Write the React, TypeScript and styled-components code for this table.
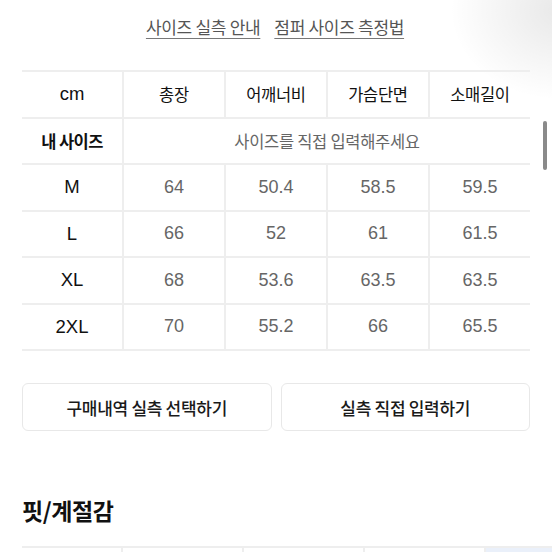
import React from "react";
import styled, { createGlobalStyle } from "styled-components";

const Global = createGlobalStyle`
  html, body { margin: 0; padding: 0; background: #fff; }
  body { font-family: "Liberation Sans", "Noto Sans CJK KR", sans-serif; overflow: hidden; }
`;

const Page = styled.div`
  position: relative;
  width: 552px;
  height: 552px;
  overflow: hidden;
  background: radial-gradient(ellipse 110px 90px at 560px 10px, rgba(0,0,0,0.09), rgba(0,0,0,0) 100%), #fff;
`;

const Content = styled.div`
  padding: 14px 22px 0 22px;
  width: 508px;
`;

const Links = styled.div`
  display: flex;
  justify-content: center;
  gap: 14px;
  height: 24px;
  align-items: center;
  padding-right: 2px;
`;

const LinkText = styled.a`
  font-family: "Noto Sans CJK KR", sans-serif;
  font-size: 17px;
  color: #555;
  text-decoration: underline;
  text-underline-offset: 4px;
  text-decoration-color: #777;
  letter-spacing: -0.3px;
`;

const Table = styled.div`
  margin-top: 32px;
  border-top: 2px solid #eeeeee;
`;

const Row = styled.div`
  display: grid;
  grid-template-columns: 100px 102px 102px 102px 102px;
  height: 44.5px;
  border-bottom: 2px solid #eeeeee;
`;

const Cell = styled.div<{ $kind?: "head" | "label" | "value"; $span?: number }>`
  display: flex;
  align-items: center;
  justify-content: center;
  grid-column: span ${(p) => p.$span ?? 1};
  font-family: "Liberation Sans", "Noto Sans CJK KR", sans-serif;
  font-size: ${(p) => (p.$kind === "value" ? "18px" : "18.5px")};
  color: ${(p) => (p.$kind === "value" ? "#666" : "#111")};
  font-weight: ${(p) => (p.$kind === "label" ? 500 : 400)};
  & + & { border-left: 2px solid #eeeeee; }
`;

const KoText = styled.span<{ $bold?: boolean }>`
  font-family: "Noto Sans CJK KR", sans-serif;
  font-size: ${(p) => (p.$bold ? "16.5px" : "16.5px")};
  font-weight: ${(p) => (p.$bold ? 700 : 400)};
  letter-spacing: ${(p) => (p.$bold ? "-0.6px" : "-0.3px")};
`;

const Buttons = styled.div`
  display: grid;
  grid-template-columns: 1fr 1fr;
  gap: 9px;
  margin-top: 32px;
`;

const Button = styled.button`
  height: 48px;
  border: 1.5px solid #e8e8e8;
  border-radius: 6px;
  background: #fff;
  font-family: "Noto Sans CJK KR", sans-serif;
  font-size: 17px;
  font-weight: 500;
  color: #1a1a1a;
  letter-spacing: -0.3px;
`;

const Heading = styled.h2`
  margin: 65px 0 0 0;
  font-family: "Noto Sans CJK KR", sans-serif;
  font-size: 23px;
  font-weight: 700;
  color: #111;
  letter-spacing: -0.4px;
  line-height: 28px;
`;

const FitRow = styled.div`
  margin-top: 22px;
  display: grid;
  grid-template-columns: 99px 121px 121px 121px 90px;
  height: 20px;
  border-top: 2px solid #eeeeee;
  width: 530px;
`;

const FitCell = styled.div<{ $tint?: boolean }>`
  background: ${(p) => (p.$tint ? "#eaf0fa" : "transparent")};
  & + & { border-left: 2px solid #eeeeee; }
`;

const Scrollbar = styled.div`
  position: absolute;
  left: 543px;
  top: 121px;
  width: 4px;
  height: 49px;
  border-radius: 2px;
  background: #8a8a8a;
`;

const heads = ["총장", "어깨너비", "가슴단면", "소매길이"];
const rows: [string, string[]][] = [
  ["M", ["64", "50.4", "58.5", "59.5"]],
  ["L", ["66", "52", "61", "61.5"]],
  ["XL", ["68", "53.6", "63.5", "63.5"]],
  ["2XL", ["70", "55.2", "66", "65.5"]],
];

export default function App() {
  return (
    <Page>
      <Global />
      <Content>
        <Links>
          <LinkText>사이즈 실측 안내</LinkText>
          <LinkText>점퍼 사이즈 측정법</LinkText>
        </Links>
        <Table>
          <Row>
            <Cell $kind="head">cm</Cell>
            {heads.map((h) => (
              <Cell key={h} $kind="head"><KoText>{h}</KoText></Cell>
            ))}
          </Row>
          <Row>
            <Cell $kind="label"><KoText $bold>내 사이즈</KoText></Cell>
            <Cell $kind="value" $span={4}><KoText>사이즈를 직접 입력해주세요</KoText></Cell>
          </Row>
          {rows.map(([s, vals]) => (
            <Row key={s}>
              <Cell $kind="label">{s}</Cell>
              {vals.map((v, i) => (
                <Cell key={i} $kind="value">{v}</Cell>
              ))}
            </Row>
          ))}
        </Table>
        <Buttons>
          <Button>구매내역 실측 선택하기</Button>
          <Button>실측 직접 입력하기</Button>
        </Buttons>
        <Heading>핏/계절감</Heading>
        <FitRow>
          <FitCell />
          <FitCell />
          <FitCell />
          <FitCell />
          <FitCell $tint />
        </FitRow>
      </Content>
      <Scrollbar />
    </Page>
  );
}
